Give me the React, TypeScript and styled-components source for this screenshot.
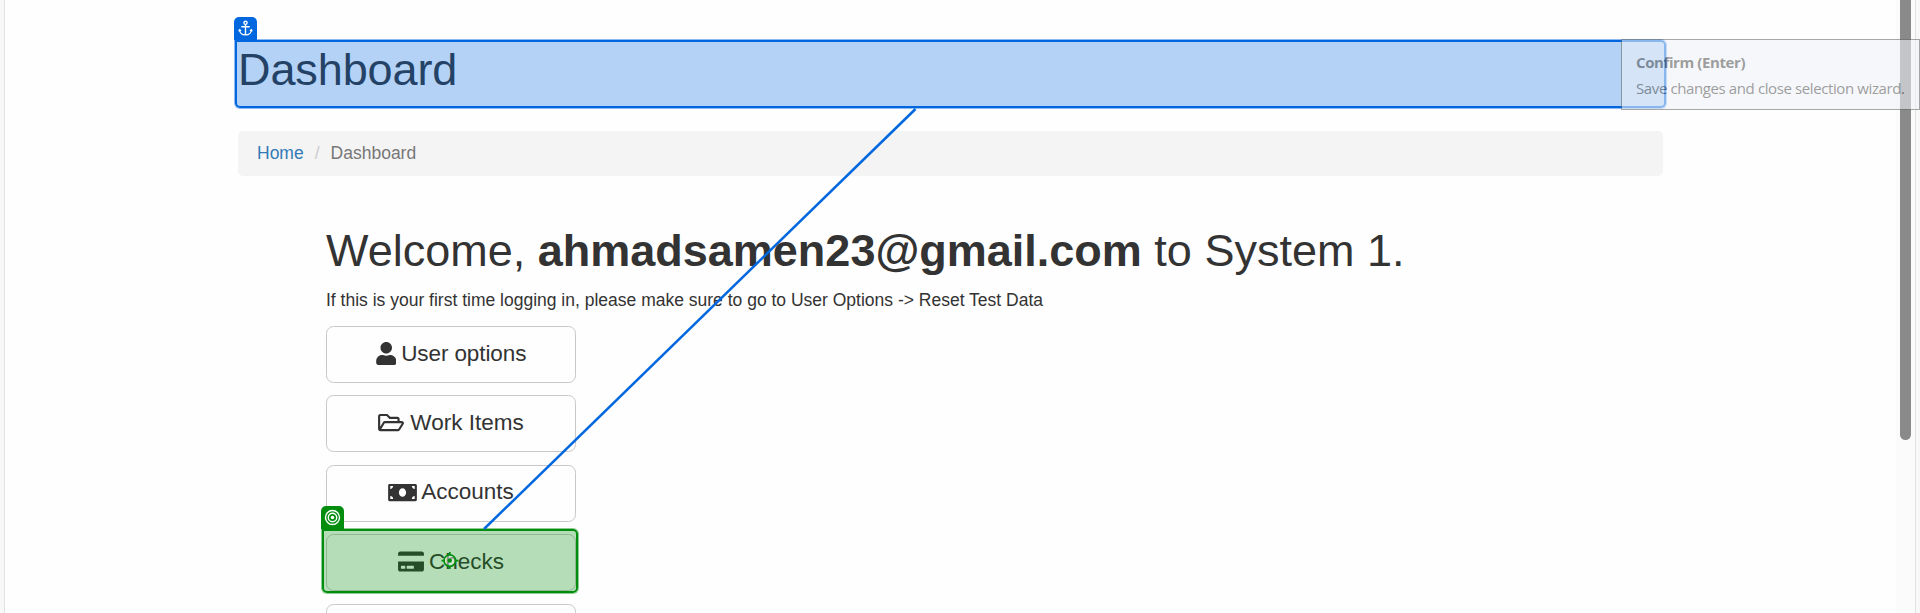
import React from "react";
import styled, { createGlobalStyle } from "styled-components";
import { FaUser, FaRegFolderOpen, FaMoneyBill, FaCreditCard } from "react-icons/fa";

const GlobalStyle = createGlobalStyle`
  *, *::before, *::after { box-sizing: border-box; }
  body {
    margin: 0;
    overflow: hidden;
    background: #f8f8f8;
    color: #333;
    font-family: "Liberation Sans", Arial, sans-serif;
    font-size: 17.5px;
    line-height: 25px;
  }
`;

const Screen = styled.div`
  position: relative;
  display: flex;
  height: 613px;
  overflow: hidden;
  padding: 0 4px;
`;

const Viewport = styled.main`
  flex: 1;
  display: flex;
  min-width: 0;
  background: #fefefe;
  border-left: 1px solid #e2e2e2;
  border-right: 1px solid #e2e2e2;
`;

const Container = styled.div`
  width: 1425px;
  margin: 0 auto 0 233px;
  padding-top: 45px;
`;

const PageTitle = styled.h1`
  margin: 0;
  font-size: 45px;
  line-height: 50px;
  font-weight: 400;
  letter-spacing: -0.1px;
`;

const Breadcrumb = styled.ol`
  display: flex;
  list-style: none;
  height: 45px;
  margin: 36px 0 50px;
  padding: 10px 19px;
  border-radius: 5px;
  background: #f4f4f4;
  color: #777;
`;

const Crumb = styled.li`
  & + &::before {
    content: "/";
    padding: 0 11px;
    color: #ccc;
  }
`;

const CrumbLink = styled.a`
  color: #337ab7;
  text-decoration: none;
`;

const Content = styled.section`
  padding-left: 88px;
`;

const Welcome = styled.h1`
  margin: 0 0 11px;
  font-size: 45px;
  line-height: 50px;
  font-weight: 400;
  white-space: nowrap;
`;

const Hint = styled.p`
  margin: 0 0 13px;
  line-height: 26px;
  white-space: nowrap;
`;

const Menu = styled.nav`
  display: flex;
  flex-direction: column;
  gap: 12.4px;
  width: 250px;
`;

const MenuButton = styled.button<{ $icon?: number; $gap?: number; $tracking?: number }>`
  display: flex;
  align-items: center;
  justify-content: center;
  gap: ${(p) => p.$gap ?? 5}px;
  height: 57px;
  flex-shrink: 0;
  padding: 0 0 2px;
  border: 1px solid #c8c8c8;
  border-radius: 7.5px;
  background: #fefefe;
  color: #333;
  font: 22.5px "Liberation Sans", Arial, sans-serif;
  letter-spacing: ${(p) => p.$tracking ?? 0}px;
  white-space: nowrap;

  svg {
    flex: none;
    width: ${(p) => p.$icon ?? 23}px;
    height: 23px;
  }
`;

const ScrollTrack = styled.div`
  width: 19px;
  padding-left: 4px;
  background: #fbfbfb;
`;

const ScrollThumb = styled.div`
  width: 11px;
  height: 440px;
  border-radius: 0 0 6px 6px;
  background: #8a8a8a;
`;

const Highlight = styled.div<{ $rgb: string; $x: number; $y: number; $w: number; $h: number }>`
  position: absolute;
  left: ${(p) => p.$x}px;
  top: ${(p) => p.$y}px;
  width: ${(p) => p.$w}px;
  height: ${(p) => p.$h}px;
  border: 2px solid rgb(${(p) => p.$rgb});
  border-radius: 0 5px 5px 5px;
  background: rgba(${(p) => p.$rgb}, 0.29);
  box-shadow: 0 0 0 1px rgba(${(p) => p.$rgb}, 0.45);
`;

const Tab = styled.div<{ $color: string }>`
  position: absolute;
  left: -3px;
  top: -25px;
  display: flex;
  align-items: center;
  justify-content: center;
  width: 23px;
  height: 23px;
  border-radius: 5px 5px 0 0;
  background: ${(p) => p.$color};
`;

const Overlay = styled.svg`
  position: absolute;
  inset: 0;
  pointer-events: none;
`;

const Tooltip = styled.div`
  position: absolute;
  left: 1621px;
  top: 39px;
  width: 299px;
  height: 71px;
  padding: 10px 14px;
  border: 1px solid #666;
  background: #f0f3f9;
  color: #555;
  opacity: 0.57;
  font-family: "Open Sans", "Noto Sans", sans-serif;
  font-size: 15px;
  line-height: 24px;
  white-space: nowrap;
`;

const TooltipTitle = styled.div`
  height: 26px;
  font-weight: 700;
  letter-spacing: -0.4px;
`;

const TooltipText = styled.div`
  letter-spacing: -0.39px;
`;

const AnchorIcon = () => (
  <svg width="15" height="17" viewBox="0 0 15 17" fill="none" stroke="#fff" strokeWidth="1.4">
    <circle cx="7.5" cy="2.8" r="1.6" />
    <path d="M7.5 4.4V15M3.3 6.8h8.4" />
    <path d="M1.5 9.7c.3 3.4 2.6 5.2 6 5.2s5.7-1.8 6-5.2M.7 11.3l.9-1.7 1.5 1.2M14.3 11.3l-.9-1.7-1.5 1.2" strokeWidth="1.2" />
  </svg>
);

const TargetIcon = () => (
  <svg width="17" height="17" viewBox="0 0 17 17" fill="none" stroke="#fff" strokeWidth="1.4">
    <circle cx="8.5" cy="8.5" r="7" />
    <circle cx="8.5" cy="8.5" r="4.2" />
    <circle cx="8.5" cy="8.5" r="1.8" fill="#fff" stroke="none" />
  </svg>
);

const App = () => (
  <>
    <GlobalStyle />
    <Screen>
      <Viewport>
        <Container>
          <PageTitle>Dashboard</PageTitle>
          <Breadcrumb>
            <Crumb><CrumbLink>Home</CrumbLink></Crumb>
            <Crumb>Dashboard</Crumb>
          </Breadcrumb>
          <Content>
            <Welcome>Welcome, <b>ahmadsamen23@gmail.com</b> to System 1.</Welcome>
            <Hint>If this is your first time logging in, please make sure to go to User Options -&gt; Reset Test Data</Hint>
            <Menu>
              <MenuButton $icon={20.5} $tracking={-0.1}><FaUser />User options</MenuButton>
              <MenuButton $icon={26} $gap={6}><FaRegFolderOpen />Work Items</MenuButton>
              <MenuButton $icon={29} $gap={4}><FaMoneyBill />Accounts</MenuButton>
              <MenuButton $icon={26}><FaCreditCard />Checks</MenuButton>
              <MenuButton />
            </Menu>
          </Content>
        </Container>
        <ScrollTrack><ScrollThumb /></ScrollTrack>
      </Viewport>

      <Highlight $rgb="0, 103, 223" $x={235} $y={40} $w={1431} $h={68}>
        <Tab $color="#0067df"><AnchorIcon /></Tab>
      </Highlight>
      <Highlight $rgb="3, 141, 15" $x={322} $y={529} $w={256} $h={64}>
        <Tab $color="#038d0f"><TargetIcon /></Tab>
      </Highlight>
      <Overlay width="1920" height="613" viewBox="0 0 1920 613" fill="none">
        <path d="M915.5 109L484 529" stroke="#0067df" strokeWidth="2.5" />
        <g stroke="#038d0f" strokeWidth="1.7">
          <circle cx="449.8" cy="560.6" r="5.8" fill="#fff" fillOpacity="0.4" />
          <path d="M449.8 552v3M449.8 566v3M441.5 560.6h3M455.5 560.6h3" />
          <circle cx="449.8" cy="560.6" r="2.2" fill="#038d0f" stroke="none" />
        </g>
      </Overlay>
      <Tooltip>
        <TooltipTitle>Confirm (Enter)</TooltipTitle>
        <TooltipText>Save changes and close selection wizard.</TooltipText>
      </Tooltip>
    </Screen>
  </>
);

export default App;
